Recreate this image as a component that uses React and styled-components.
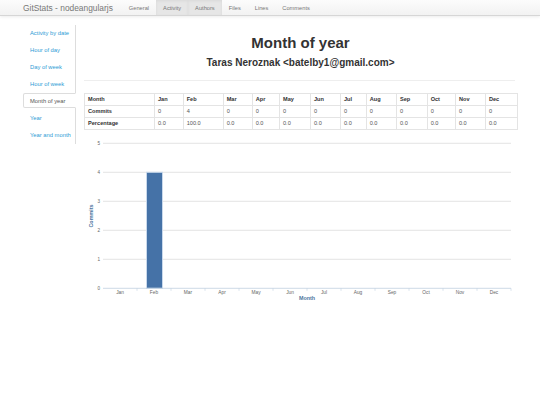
import React from 'react';
import styled, { createGlobalStyle } from 'styled-components';

const GlobalStyle = createGlobalStyle`
  html, body {
    margin: 0;
    padding: 0;
    background: #fff;
  }
  body {
    font-family: "Liberation Sans", Arial, sans-serif;
    color: #333;
  }
`;

const navLinks = [
    { label: 'General' },
    { label: 'Activity', active: true },
    { label: 'Authors', active: true },
    { label: 'Files' },
    { label: 'Lines' },
    { label: 'Comments' },
];

const sideLinks = [
    'Activity by date',
    'Hour of day',
    'Day of week',
    'Hour of week',
    'Month of year',
    'Year',
    'Year and month',
];

const months = ['Jan', 'Feb', 'Mar', 'Apr', 'May', 'Jun', 'Jul', 'Aug', 'Sep', 'Oct', 'Nov', 'Dec'];
const commits = [0, 4, 0, 0, 0, 0, 0, 0, 0, 0, 0, 0];
const colWidths = [70, 28.7, 40, 29, 27.3, 31, 30, 25.7, 30.3, 30.7, 28.3, 30, 31.7];

const total = commits.reduce((a, b) => a + b, 0);

// chart geometry, in page coordinates (viewBox starts at the chart's page origin)
const plot = { left: 104, right: 512, top: 142.3, bottom: 287.3, max: 5 };
const catW = (plot.right - plot.left) / 12;
const yFor = (v) => plot.bottom - (v / plot.max) * (plot.bottom - plot.top);

const MonthChart = () => (
    <ChartSvg viewBox="84 133 433 172" width="433" height="172">
        {[0, 1, 2, 3, 4, 5].map((v) => (
            <g key={v}>
                {v > 0 && (
                    <line x1={plot.left} x2={plot.right} y1={yFor(v)} y2={yFor(v)} stroke="#dcdcdc" strokeWidth="0.8" />
                )}
                <text x="101" y={yFor(v) + 1.7} textAnchor="end" fontSize="4.6" fill="#666">{v}</text>
            </g>
        ))}
        {commits.map((c, i) =>
            c > 0 ? (
                <rect
                    key={i}
                    x={plot.left + i * catW + 9.5}
                    y={yFor(c)}
                    width={catW - 18}
                    height={plot.bottom - yFor(c)}
                    fill="#4572a7"
                    stroke="#c9d9ec"
                    strokeWidth="1"
                />
            ) : null
        )}
        <line x1={plot.left} x2={plot.right} y1={plot.bottom} y2={plot.bottom} stroke="#c0d0e0" strokeWidth="0.8" />
        {months.map((m, i) => (
            <g key={m}>
                <line
                    x1={plot.left + (i + 1) * catW}
                    x2={plot.left + (i + 1) * catW}
                    y1={plot.bottom}
                    y2={plot.bottom + 2.5}
                    stroke="#c0d0e0"
                    strokeWidth="0.6"
                />
                <text x={plot.left + (i + 0.5) * catW} y="292.7" textAnchor="middle" fontSize="4.8" fill="#666">{m}</text>
            </g>
        ))}
        <text x="308" y="299.2" textAnchor="middle" fontSize="5.4" fontWeight="bold" fill="#4d759e">Month</text>
        <text
            x="94"
            y="215"
            textAnchor="middle"
            fontSize="5.4"
            fontWeight="bold"
            fill="#4d759e"
            transform="rotate(-90 94 215)"
        >
            Commits
        </text>
    </ChartSvg>
);

const App = () => {
    return (
        <>
            <GlobalStyle />
            <Navbar>
                <Brand>GitStats - nodeangularjs</Brand>
                {navLinks.map((l) => (
                    <NavItem key={l.label} $active={l.active}>{l.label}</NavItem>
                ))}
            </Navbar>
            <Page>
                <Sidebar>
                    {sideLinks.map((s) => (
                        <SideItem key={s} $active={s === 'Month of year'}>{s}</SideItem>
                    ))}
                </Sidebar>
                <Main>
                    <Title>Month of year</Title>
                    <Subtitle>Taras Neroznak &lt;batelby1@gmail.com&gt;</Subtitle>
                    <Rule />
                    <StatsTable>
                        <colgroup>
                            {colWidths.map((w, i) => (
                                <Col key={i} $w={w} />
                            ))}
                        </colgroup>
                        <tbody>
                            <tr>
                                <HeadCell>Month</HeadCell>
                                {months.map((m) => (
                                    <HeadCell key={m}>{m}</HeadCell>
                                ))}
                            </tr>
                            <tr>
                                <HeadCell>Commits</HeadCell>
                                {commits.map((c, i) => (
                                    <Cell key={i}>{c}</Cell>
                                ))}
                            </tr>
                            <tr>
                                <HeadCell>Percentage</HeadCell>
                                {commits.map((c, i) => (
                                    <Cell key={i}>{((c / total) * 100).toFixed(1)}</Cell>
                                ))}
                            </tr>
                        </tbody>
                    </StatsTable>
                    <MonthChart />
                </Main>
            </Page>
        </>
    );
};

const Navbar = styled.nav`
  display: flex;
  align-items: stretch;
  height: 15px;
  padding-left: 23px;
  background: linear-gradient(to bottom, #fcfcfc, #f2f2f2);
  border-bottom: 1px solid #d6d6d6;
  box-shadow: 0 1px 3px rgba(0, 0, 0, 0.08);
`;

const Brand = styled.div`
  display: flex;
  align-items: center;
  font-size: 8.4px;
  color: #777;
  margin-right: 9px;
  white-space: nowrap;
`;

const NavItem = styled.div`
  display: flex;
  align-items: center;
  padding: 0 7px;
  font-size: 5.7px;
  color: #777;
  white-space: nowrap;
  background: ${(p) => (p.$active ? '#e6e6e6' : 'transparent')};
  box-shadow: ${(p) => (p.$active ? 'inset 0 1px 3px rgba(0, 0, 0, 0.06)' : 'none')};
`;

const Page = styled.div`
  display: flex;
  align-items: flex-start;
  gap: 8px;
  padding: 9px 23px 0;
`;

const Sidebar = styled.ul`
  display: flex;
  flex-direction: column;
  gap: 2px;
  width: 52px;
  margin: 0;
  padding: 0 0 2px;
  list-style: none;
  border-right: 1px solid #ddd;
  flex-shrink: 0;
`;

const SideItem = styled.li`
  display: flex;
  align-items: center;
  height: 15px;
  padding-left: 6px;
  margin-right: -1px;
  font-size: 5.8px;
  white-space: nowrap;
  box-sizing: border-box;
  color: ${(p) => (p.$active ? '#555' : '#2d9bd5')};
  background: ${(p) => (p.$active ? '#fff' : 'transparent')};
  border: 1px solid ${(p) => (p.$active ? '#ddd' : 'transparent')};
  border-right-color: transparent;
  border-radius: 2px 0 0 2px;
`;

const Main = styled.div`
  flex: 1;
  min-width: 0;
  display: flex;
  flex-direction: column;
`;

const Title = styled.h1`
  margin: 9px 0 0;
  font-size: 15px;
  line-height: 18px;
  font-weight: bold;
  text-align: center;
  color: #333;
`;

const Subtitle = styled.h2`
  margin: 5px 0 0;
  font-size: 10px;
  line-height: 12px;
  font-weight: bold;
  text-align: center;
  color: #333;
`;

const Rule = styled.hr`
  margin: 10.5px 0 0;
  border: 0;
  border-top: 1px solid #eee;
  width: 431px;
`;

const StatsTable = styled.table`
  margin-top: 12px;
  width: 433px;
  table-layout: fixed;
  border-collapse: collapse;
  font-size: 5.6px;
`;

const Col = styled.col`
  width: ${(p) => p.$w}px;
`;

const cellBase = `
  height: 12.2px;
  padding: 0 3px;
  border: 1px solid #e4e4e4;
  text-align: left;
  white-space: nowrap;
  box-sizing: border-box;
`;

const HeadCell = styled.th`
  ${cellBase}
  font-weight: bold;
  color: #333;
`;

const Cell = styled.td`
  ${cellBase}
  color: #555;
`;

const ChartSvg = styled.svg`
  display: block;
  margin-top: 3.5px;
  margin-left: -1px;
  font-family: "Liberation Sans", Arial, sans-serif;
`;

export default App;
